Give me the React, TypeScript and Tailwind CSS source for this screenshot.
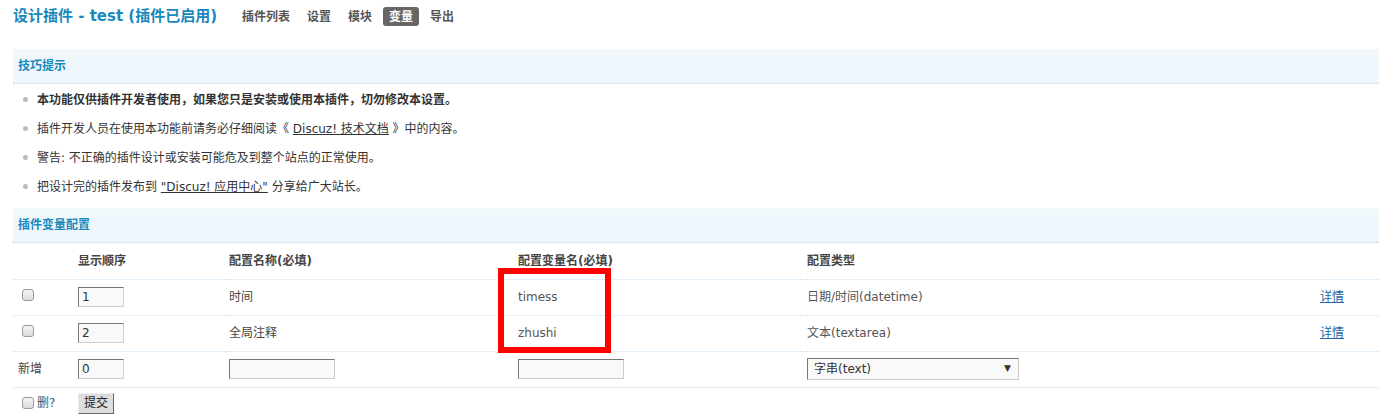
import React from 'react';

const font = { fontFamily: '"DejaVu Sans", "Noto Sans CJK SC", sans-serif' };

const navItems = ['插件列表', '设置', '模块', '变量', '导出'];

const SectionBar: React.FC<{ title: string }> = ({ title }) => (
  <div className="h-[35px] flex items-center pl-[5px] bg-gradient-to-b from-[#f2f9fd] to-[#eef5fb] border-b border-dotted border-[#c5d8e6]">
    <span className="text-[12px] font-bold text-[#1889bd]">{title}</span>
  </div>
);

const TextInput: React.FC<{ value?: string; w: string }> = ({ value = '', w }) => (
  <div
    className={`${w} h-[20px] bg-[#f9f9f9] border border-t-[#777] border-l-[#777] border-b-[#ccc] border-r-[#ccc] flex items-center pl-[3px] text-[12px] text-[#333]`}
  >
    {value}
  </div>
);

const Check: React.FC = () => (
  <span className="inline-block w-[12px] h-[12px] rounded-[3px] border border-[#999] bg-gradient-to-b from-[#f4f4f4] to-[#dcdcdc]" />
);

const App: React.FC = () => {
  const tips = [
    { bold: true, content: <>本功能仅供插件开发者使用，如果您只是安装或使用本插件，切勿修改本设置。</> },
    {
      content: (
        <>
          插件开发人员在使用本功能前请务必仔细阅读《 <span className="underline">Discuz! 技术文档</span> 》中的内容。
        </>
      ),
    },
    { content: <>警告: 不正确的插件设计或安装可能危及到整个站点的正常使用。</> },
    {
      content: (
        <>
          把设计完的插件发布到 <span className="underline">"Discuz! 应用中心"</span> 分享给广大站长。
        </>
      ),
    },
  ];

  const rows = [
    { order: '1', name: '时间', key: 'timess', type: '日期/时间(datetime)' },
    { order: '2', name: '全局注释', key: 'zhushi', type: '文本(textarea)' },
  ];

  const rowCls = 'h-[36px] border-b border-dotted border-[#cfe0ea]';

  return (
    <div className="w-[1379px] h-[420px] overflow-hidden bg-white pl-[13px] text-[#333]" style={font}>
      {/* Title */}
      <div className="h-[33px] flex items-center">
        <span className="text-[15px] font-bold text-[#1889bd] mr-[19px]">设计插件 - test (插件已启用)</span>
        <div className="flex items-center gap-[5px]">
          {navItems.map((n) => (
            <span
              key={n}
              className={`text-[12px] font-bold px-[6px] h-[19px] flex items-center rounded-[3px] ${
                n === '变量' ? 'bg-[#666] text-white' : 'text-[#555]'
              }`}
            >
              {n}
            </span>
          ))}
        </div>
      </div>

      <div className="mt-[16px]">
        <SectionBar title="技巧提示" />
        <ul className="pt-[1px] pb-[7px]">
          {tips.map((t, i) => (
            <li key={i} className="h-[29px] flex items-center text-[12px] text-[#333]">
              <span className="w-[5px] h-[5px] rounded-full bg-[#bbb] ml-[10px] mr-[9px]" />
              <span className={t.bold ? 'font-bold' : ''}>{t.content}</span>
            </li>
          ))}
        </ul>
        <SectionBar title="插件变量配置" />

        <div className="relative">
          <table className="table-fixed border-collapse text-[12px]" style={{ width: 1366 }}>
            <colgroup>
              <col style={{ width: 65 }} />
              <col style={{ width: 151 }} />
              <col style={{ width: 289 }} />
              <col style={{ width: 289 }} />
              <col style={{ width: 513 }} />
              <col />
            </colgroup>
            <thead>
              <tr className={rowCls}>
                <th />
                <th className="text-left font-bold text-[#444]">显示顺序</th>
                <th className="text-left font-bold text-[#444]">配置名称(必填)</th>
                <th className="text-left font-bold text-[#444]">配置变量名(必填)</th>
                <th className="text-left font-bold text-[#444]">配置类型</th>
                <th />
              </tr>
            </thead>
            <tbody>
              {rows.map((r) => (
                <tr key={r.key} className={rowCls}>
                  <td className="pl-[9px]">
                    <Check />
                  </td>
                  <td>
                    <TextInput value={r.order} w="w-[46px]" />
                  </td>
                  <td className="text-[#444]">{r.name}</td>
                  <td className="text-[#555]">{r.key}</td>
                  <td className="text-[#555]">{r.type}</td>
                  <td>
                    <span className="text-[#2366a8] underline">详情</span>
                  </td>
                </tr>
              ))}
              <tr className="h-[36px] border-b border-[#deebf4]">
                <td className="pl-[5px] text-[#444]">新增</td>
                <td>
                  <TextInput value="0" w="w-[46px]" />
                </td>
                <td>
                  <TextInput w="w-[106px]" />
                </td>
                <td>
                  <TextInput w="w-[106px]" />
                </td>
                <td>
                  <div className="w-[212px] h-[22px] bg-[#f9f9f9] border border-t-[#777] border-l-[#777] border-b-[#ccc] border-r-[#ccc] flex items-center justify-between pl-[6px] pr-[7px] text-[12px] text-[#333]">
                    <span>字串(text)</span>
                    <span className="text-[9px]">▼</span>
                  </div>
                </td>
                <td />
              </tr>
              <tr className="h-[32px]">
                <td className="pl-[9px]">
                  <span className="flex items-center gap-[3px] text-[#555]">
                    <Check />
                    删?
                  </span>
                </td>
                <td>
                  <button className="h-[21px] px-[5px] bg-[#ddd] border border-t-[#eee] border-l-[#eee] border-b-[#666] border-r-[#666] text-[12px] text-[#222]">
                    提交
                  </button>
                </td>
                <td />
                <td />
                <td />
                <td />
              </tr>
            </tbody>
          </table>
          {/* red highlight annotation */}
          <div className="absolute left-[485px] top-[25px] w-[113px] h-[85px] border-[6px] border-[#f00] pointer-events-none" />
        </div>
      </div>
    </div>
  );
};

export default App;
